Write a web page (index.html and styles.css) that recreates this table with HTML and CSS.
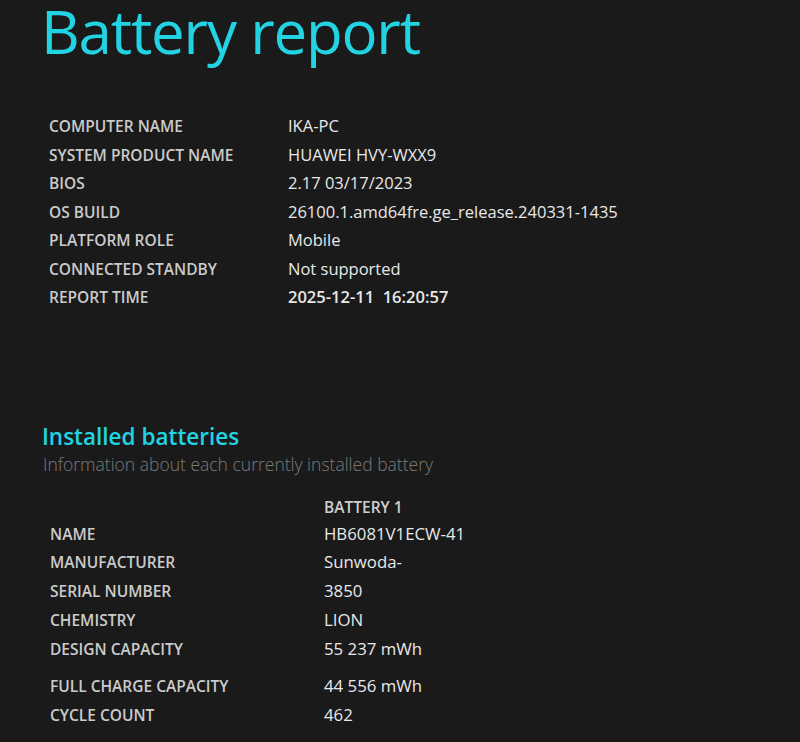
FILE: index.html
```html
<!DOCTYPE html>
<html>
<head>
<meta charset="utf-8">
<link rel="stylesheet" href="styles.css">
</head>
<body>
<div class="page">
  <h1 class="title">Battery report</h1>
  <div class="info">
    <div class="label">COMPUTER NAME</div><div class="value">IKA-PC</div>
    <div class="label">SYSTEM PRODUCT NAME</div><div class="value">HUAWEI HVY-WXX9</div>
    <div class="label">BIOS</div><div class="value">2.17 03/17/2023</div>
    <div class="label">OS BUILD</div><div class="value">26100.1.amd64fre.ge_release.240331-1435</div>
    <div class="label">PLATFORM ROLE</div><div class="value">Mobile</div>
    <div class="label">CONNECTED STANDBY</div><div class="value">Not supported</div>
    <div class="label">REPORT TIME</div><div class="value strong">2025-12-11&nbsp;&nbsp;16:20:57</div>
  </div>
  <h2 class="section">Installed batteries</h2>
  <div class="subtitle">Information about each currently installed battery</div>
  <div class="batteries">
    <div class="label"></div><div class="colhead">BATTERY 1</div>
    <div class="label">NAME</div><div class="value">HB6081V1ECW-41</div>
    <div class="label">MANUFACTURER</div><div class="value">Sunwoda-</div>
    <div class="label">SERIAL NUMBER</div><div class="value">3850</div>
    <div class="label">CHEMISTRY</div><div class="value">LION</div>
    <div class="label">DESIGN CAPACITY</div><div class="value">55 237 mWh</div>
    <div class="label spaced">FULL CHARGE CAPACITY</div><div class="value spaced">44 556 mWh</div>
    <div class="label">CYCLE COUNT</div><div class="value">462</div>
  </div>
</div>
</body>
</html>
```
FILE: styles.css
```css
html, body {
  margin: 0;
  padding: 0;
  background: #1a1a1a;
}
body {
  font-family: "Open Sans", "Noto Sans", sans-serif;
  color: #e4e4e4;
  overflow: hidden;
}
.page {
  padding-left: 43px;
}
.title {
  margin: 0 0 0 -2px;
  font-weight: 400;
  font-size: 60px;
  line-height: 62px;
  color: #22d3e3;
  letter-spacing: -1.2px;
}
.info {
  display: grid;
  grid-template-columns: 239px auto;
  margin-top: 50px;
  padding-left: 6px;
}
.label {
  font-weight: 600;
  font-size: 15.5px;
  line-height: 28.5px;
  color: #cbcbcb;
}
.value {
  font-size: 16.5px;
  line-height: 28.5px;
  color: #e8e8e8;
}
.value.strong {
  font-weight: 600;
}
.section {
  margin: 111px 0 0 -1px;
  font-weight: 600;
  font-size: 22.5px;
  line-height: 28px;
  color: #22d3e3;
}
.subtitle {
  font-weight: 300;
  font-size: 17.5px;
  line-height: 26px;
  color: #7a7a7a;
  margin-top: 0;
}
.batteries {
  display: grid;
  grid-template-columns: 274px auto;
  margin-top: 17px;
  padding-left: 7px;
}
.batteries .value {
  font-size: 16.8px;
}
.batteries .label,
.batteries .value {
  line-height: 28.75px;
}
.colhead {
  font-weight: 600;
  font-size: 15.5px;
  line-height: 26px;
  color: #d0d0d0;
}
.batteries .spaced {
  margin-top: 9px;
}
```
